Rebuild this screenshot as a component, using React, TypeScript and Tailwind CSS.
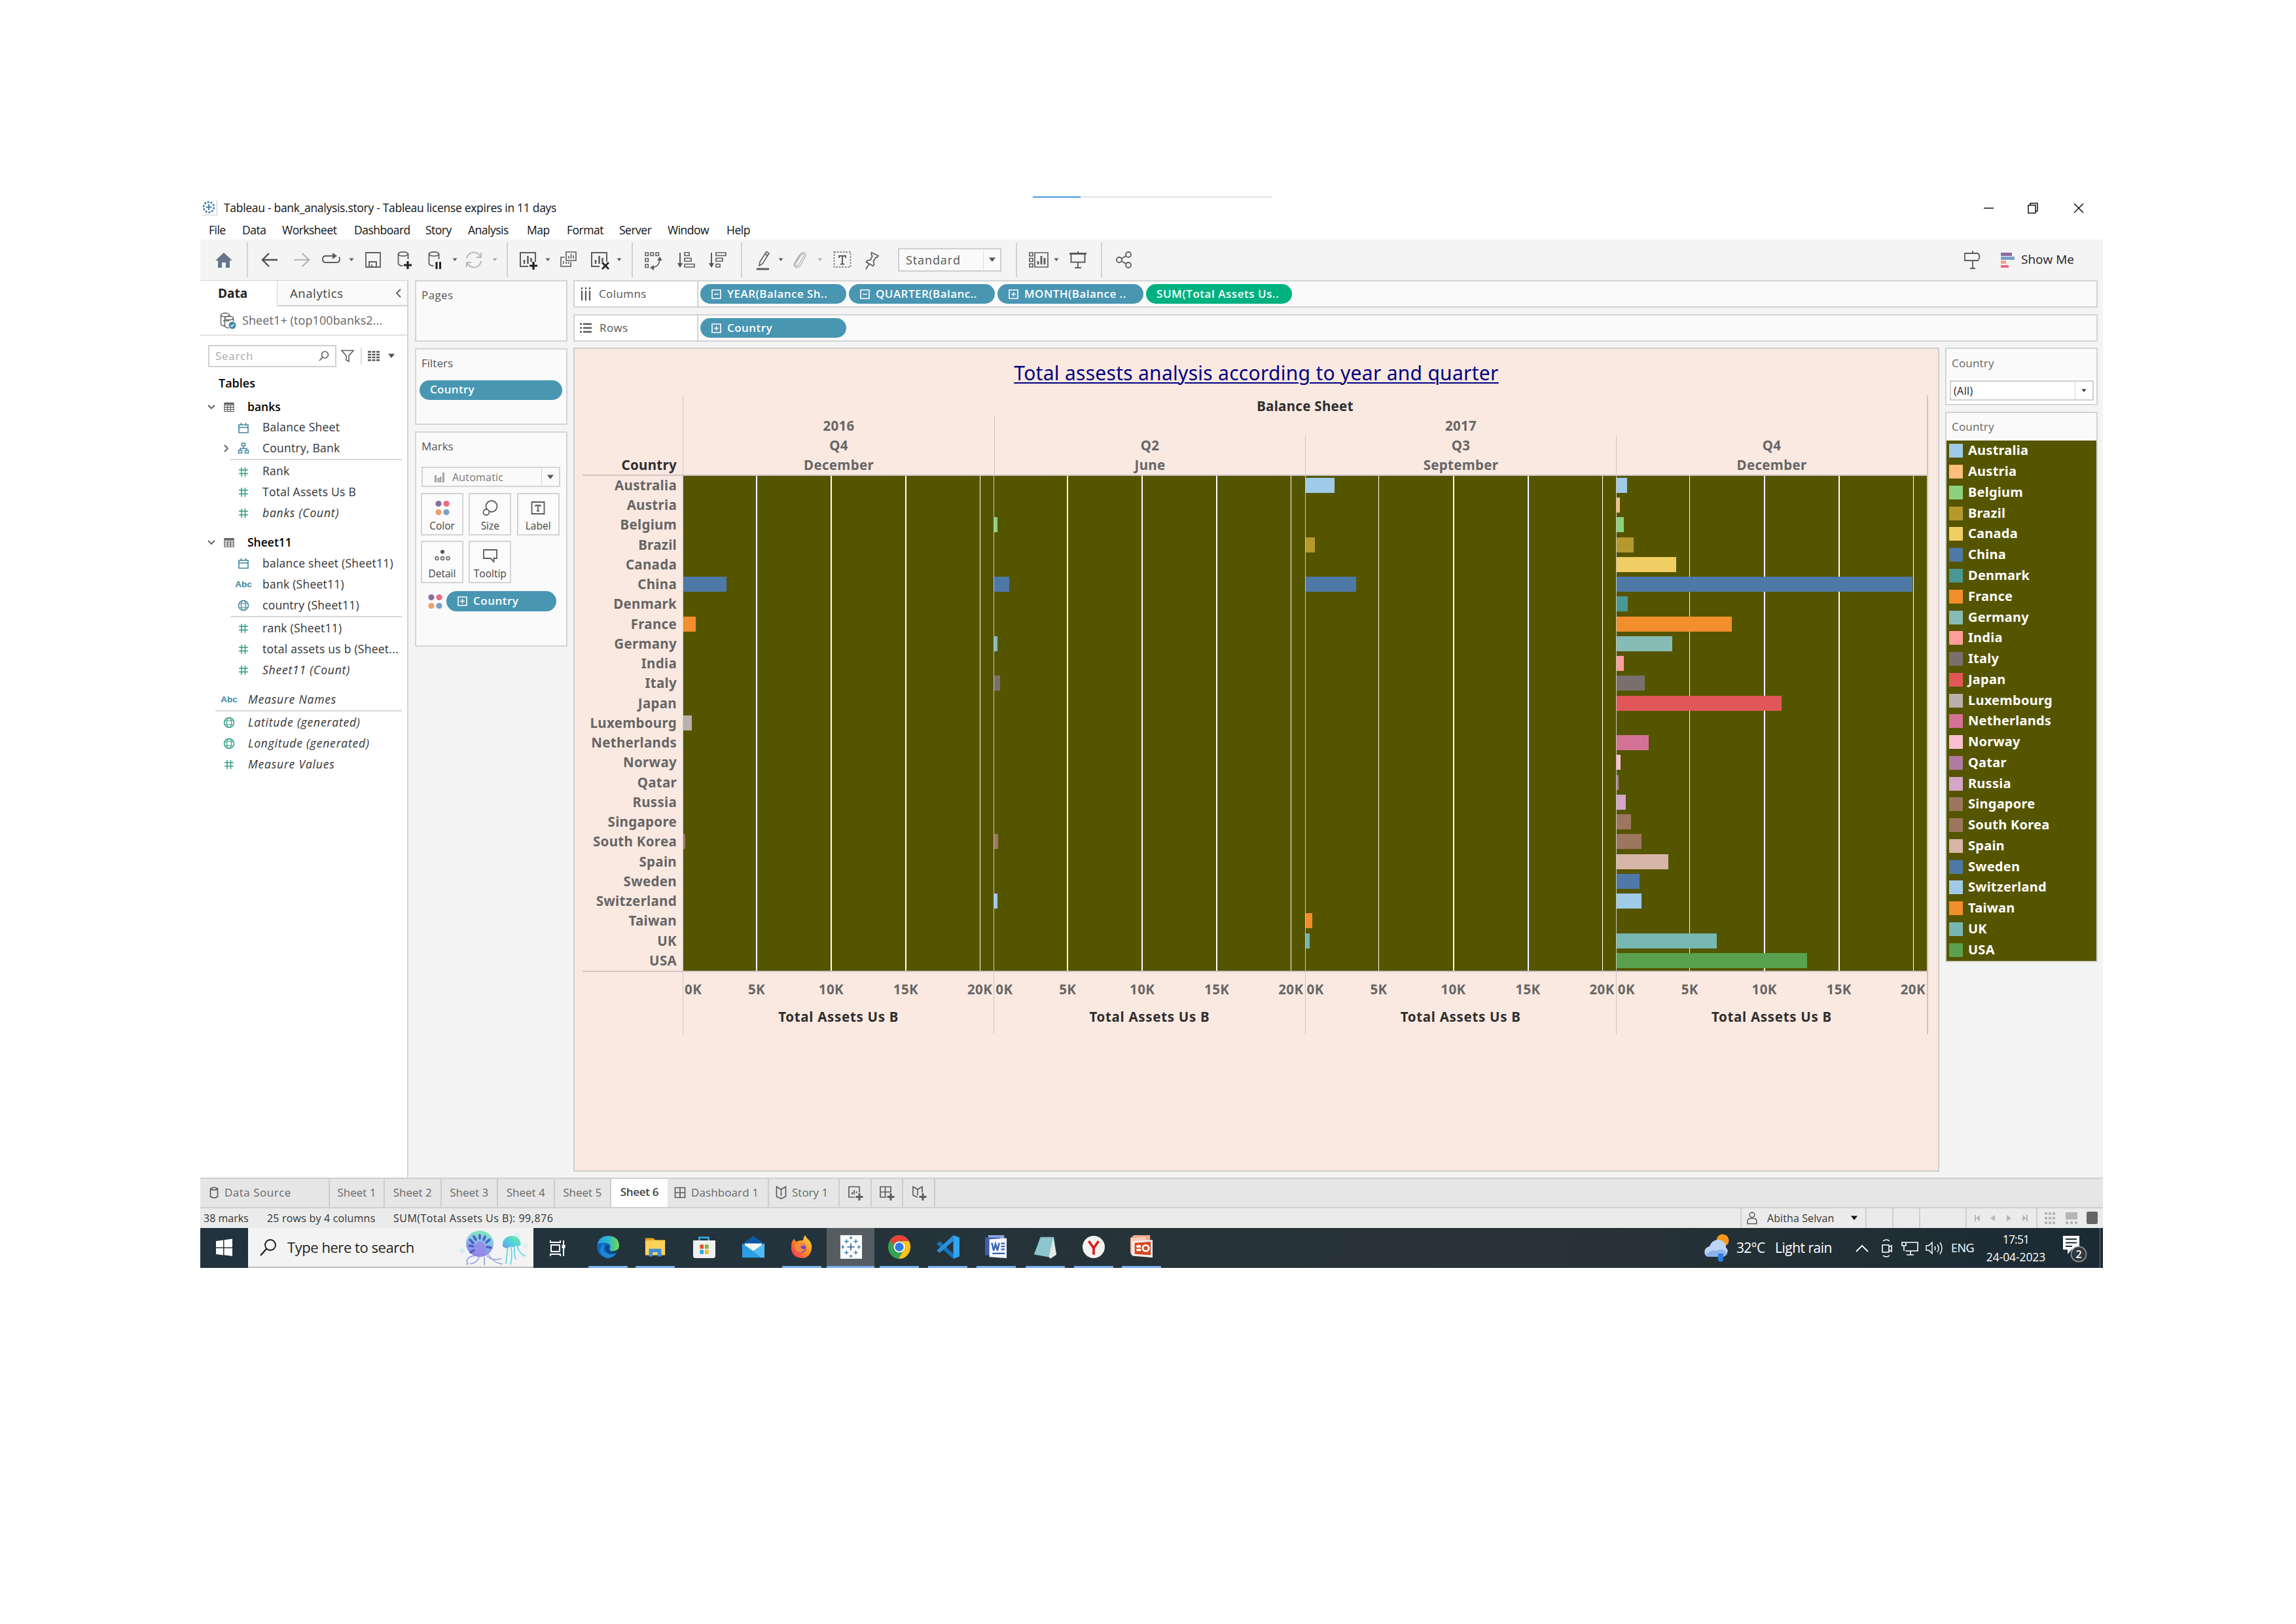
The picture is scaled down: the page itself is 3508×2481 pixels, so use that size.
import React from "react";

type Kids = { children?: React.ReactNode; c?: string };

/* ---------- icon primitives ---------- */
function Ico({ children, c = "", s = 28, h }: Kids & { s?: number; h?: number }) {
  return (
    <svg
      width={s}
      height={h ?? s}
      viewBox={`0 0 ${s} ${h ?? s}`}
      fill="none"
      stroke="#5c5c5c"
      strokeWidth={1.8}
      className={`shrink-0 overflow-visible ${c}`}
    >
      {children}
    </svg>
  );
}
const Caret = ({ c = "", f = "#5c5c5c" }: { c?: string; f?: string }) => (
  <svg width="10" height="6" viewBox="0 0 10 6" className={`shrink-0 ${c}`}>
    <path d="M1.500 0.500h7L5 5z" fill={f} />
  </svg>
);
const BigCaret = ({ c = "", f = "#555" }: { c?: string; f?: string }) => (
  <svg width="12" height="8" viewBox="0 0 12 8" className={`shrink-0 ${c}`}>
    <path d="M1 0.500h10L6 7z" fill={f} />
  </svg>
);
const Sep = ({ c }: { c: string }) => <div className={`h-[54px] w-[2px] shrink-0 bg-[#d2d2d2] ${c}`} />;

const Hash = ({ c = "#2f9c82" }: { c?: string }) => (
  <Ico s={18}>
    <path d="M6 2v14M11.500 2v14M2 6h14M2 11.500h14" stroke={c} strokeWidth={1.500} />
  </Ico>
);
const Cal = () => (
  <Ico s={18}>
    <path d="M2 4h14v12H2zM2 8h14M5.500 1v4M12.500 1v4" stroke="#3d86a3" strokeWidth={1.600} />
  </Ico>
);
const Tree = () => (
  <Ico s={18}>
    <path d="M6.500 1h5v4h-5zM9 5v4M4 12V9h10v3M1.500 12h5v4h-5zM11.500 12h5v4h-5z" stroke="#3d86a3" strokeWidth={1.5} />
  </Ico>
);
const Globe = ({ c = "#3d86a3" }: { c?: string }) => (
  <Ico s={18}>
    <circle cx="9" cy="9" r="7.500" stroke={c} strokeWidth={1.500} />
    <ellipse cx="9" cy="9" rx="3.600" ry="7.500" stroke={c} strokeWidth={1.200} />
    <path d="M2.500 6h13M2.500 12h13" stroke={c} strokeWidth={1.200} />
  </Ico>
);
const Abc = () => (
  <span className="text-[13.500px] font-bold text-[#3d86a3] font-['Liberation_Sans',sans-serif]">Abc</span>
);
const TableIco = () => (
  <Ico s={16}>
    <path d="M1 1.500h14v13H1zM1 5h14M1 8.300h14M1 11.500h14M5.700 5v9.500M10.300 5v9.500" strokeWidth={1.200} />
    <path d="M1 2h14v2H1z" fill="#666" stroke="none" />
  </Ico>
);
const Dots = ({ c = "" }: { c?: string }) => (
  <svg width="22" height="24" viewBox="0 0 22 24" className={`shrink-0 ${c}`}>
    <circle cx="5" cy="5.500" r="4.600" fill="#8a6d9c" />
    <circle cx="17" cy="5.500" r="4.600" fill="#f0677f" />
    <circle cx="5" cy="18.500" r="4.600" fill="#f0a06c" />
    <circle cx="17" cy="18.500" r="4.600" fill="#7b9fc9" />
  </svg>
);

/* ---------- title and menu ---------- */
const TableauMark = () => (
  <svg width="24" height="24" viewBox="0 0 24 24" className="shrink-0" fill="none" stroke="#3a7ca3" strokeWidth="2.400">
    <circle cx="10" cy="10.500" r="8" strokeDasharray="3.200 1.800" />
    <path d="M10 6v9M5.500 10.500h9" strokeWidth="1.800" />
    <path d="M22.500 0v22.500H0" stroke="#ccc" strokeWidth="1.200" />
  </svg>
);

function TitleBar() {
  return (
    <div className="relative flex h-[40px] items-center bg-white pl-[3px] pb-[5px]">
      <div className="absolute left-[1272px] top-0 flex h-[2px] w-[366px] bg-[#e4e4e4]">
        <div className="w-[73px] bg-[#4a97e8]" />
      </div>
      <TableauMark />
      <span className="ml-[9px] text-[17.500px] tracking-[-0.300px] text-[#111] font-['Open_Sans',sans-serif]">
        Tableau - bank_analysis.story - Tableau license expires in 11 days
      </span>
      <svg width="160" height="20" viewBox="0 0 160 20" className="ml-auto mr-[28px]" fill="none" stroke="#111" strokeWidth="1.500">
        <path d="M6 10h15M144 3l14 14M158 3l-14 14" />
        <path d="M74 5.500h11v12H74zM77 5.500V2.500h11v12h-3" />
      </svg>
    </div>
  );
}

const MENU: [string, string][] = [
  ["File", "w-[51px]"],
  ["Data", "w-[61px]"],
  ["Worksheet", "w-[110px]"],
  ["Dashboard", "w-[109px]"],
  ["Story", "w-[65px]"],
  ["Analysis", "w-[90px]"],
  ["Map", "w-[61px]"],
  ["Format", "w-[80px]"],
  ["Server", "w-[74px]"],
  ["Window", "w-[90px]"],
  ["Help", "w-[60px]"],
];
function MenuBar() {
  return (
    <div className="flex h-[26px] items-center bg-white pb-[3px] pl-[13px] text-[17.500px] tracking-[-0.500px] text-[#111] font-['Open_Sans',sans-serif]">
      {MENU.map(([t, w]) => (
        <span key={t} className={`shrink-0 ${w}`}>
          {t}
        </span>
      ))}
    </div>
  );
}

function Toolbar() {
  return (
    <div className="flex h-[62px] items-center bg-[#f4f4f4] text-[#333]">
      <Ico c="ml-[22px]">
        <path d="M14 3l13 12h-4V26h-6v-8h-6v8H5V15H1z" fill="#67758a" stroke="none" />
      </Ico>
      <Sep c="ml-[21px]" />
      <Ico c="ml-[19px]">
        <path d="M26 14H3M13 4L3 14l10 10" strokeWidth={2.400} stroke="#505050" />
      </Ico>
      <Ico c="ml-[21px]">
        <path d="M2 14h23M15 4l10 10-10 10" strokeWidth={2.200} stroke="#b4b4b4" />
      </Ico>
      <Ico c="ml-[17px]">
        <path d="M18 8H6q-5 0-5 5t5 5h16q5 0 5-5 0-2-1-3.500" strokeWidth={1.900} />
        <path d="M16 3l7 5-7 5z" fill="#5c5c5c" stroke="none" />
      </Ico>
      <Caret c="ml-[12px]" />
      <Ico c="ml-[14px]">
        <path d="M3 3h22v22H3zM8 25v-8h11v8M12 25v-4" />
      </Ico>
      <Ico c="ml-[19px]">
        <ellipse cx="13" cy="5" rx="7.500" ry="3.200" />
        <path d="M5.500 5v15q1 3 7 3M20.500 5v8" />
        <path d="M20 16v12M14 22h12" strokeWidth={3.200} stroke="#222" />
      </Ico>
      <Ico c="ml-[20px]">
        <ellipse cx="12" cy="5" rx="7.500" ry="3.200" />
        <path d="M4.500 5v15q1 3 7 3M19.500 5v8" />
        <path d="M16 17v11M21.500 17v11" strokeWidth={3} stroke="#222" />
      </Ico>
      <Caret c="ml-[11px]" />
      <Ico c="ml-[10px]">
        <path d="M3 12a11 11 0 0 1 21-3M25 16a11 11 0 0 1-21 3M25 3v7h-7M3 25v-7h7" stroke="#b8b8b8" strokeWidth={2} />
      </Ico>
      <Caret c="ml-[13px]" f="#a8a8a8" />
      <Sep c="ml-[13px]" />
      <Ico c="ml-[17px]">
        <path d="M14 24H2V3h23v14" strokeWidth={2} />
        <path d="M8 20v-6M13.500 20V8M18.500 17v-6" strokeWidth={2.600} />
        <path d="M22 17v12M16 23h12" strokeWidth={3.200} stroke="#222" />
      </Ico>
      <Caret c="ml-[11px]" />
      <Ico c="ml-[12px]">
        <path d="M11 2h15v13H11zM9 10H3v14h15v-7M7 20v-4M11 20v-3M14.500 20v-3M15 12V8M18.500 12V5M22 12V7" strokeWidth={1.600} />
      </Ico>
      <Ico c="ml-[20px]">
        <path d="M14 24H2V3h23v14" strokeWidth={2} />
        <path d="M8 20v-6M13.500 20V8M18.500 17v-6" strokeWidth={2.600} />
        <path d="M18 18l10 10M28 18L18 28" strokeWidth={2.800} stroke="#222" />
      </Ico>
      <Caret c="ml-[11px]" />
      <Sep c="ml-[14px]" />
      <Ico c="ml-[17px]">
        <path d="M2 3h4.500v4.500H2zM10 3h4.500v4.500H10zM18 3h4.500v4.500H18zM2 12h4.500v4.500H2zM2 21h4.500v4.500H2z" strokeWidth={1.500} />
        <path d="M24 12q0 13-13 14" strokeWidth={1.600} />
        <path d="M20 15l4-6 4 6zM15 22l-6 4 6 4z" fill="#5c5c5c" stroke="none" />
      </Ico>
      <Ico c="ml-[23px]">
        <path d="M4 3v22" strokeWidth={2} />
        <path d="M0 19h8l-4 7z" fill="#555" stroke="none" />
        <path d="M11 3h7v4.500h-7zM11 11.500h10V16H11zM11 20.500h15V25H11z" strokeWidth={1.600} />
      </Ico>
      <Ico c="ml-[20px]">
        <path d="M4 3v22" strokeWidth={2} />
        <path d="M0 19h8l-4 7z" fill="#555" stroke="none" />
        <path d="M11 3h15v4.500H11zM11 11.500h10V16H11zM11 20.500h6V25h-6z" strokeWidth={1.600} />
      </Ico>
      <Sep c="ml-[21px]" />
      <Ico c="ml-[18px]">
        <path d="M19 1.500l4 2.500L13 20l-5 3 1-6zM17 5l4 2.500" strokeWidth={1.600} />
        <path d="M4 28h19" strokeWidth={3} />
      </Ico>
      <Caret c="ml-[8px]" />
      <Ico c="ml-[10px]">
        <path d="M9 18l7-12q3-2.500 4.500 1L12 22q-4 3-5.500-1L15 5q4-5 8 0 1 2-1 5l-8 14q-5 4-8.500-1-1-2 1-5l7-12" stroke="#b5b5b5" strokeWidth={1.400} />
      </Ico>
      <Caret c="ml-[12px]" f="#b0b0b0" />
      <Ico c="ml-[15px]">
        <rect x="1.500" y="2" width="25" height="23" strokeDasharray="2.500 2" strokeWidth={1.400} />
        <path d="M9 11V8h10v3M14 8v13M11 20.500h6" strokeWidth={2} />
      </Ico>
      <Ico c="ml-[17px]">
        <path d="M16 3l9 7-2 2-2-.5-5 5v5l-2 2-9-8 2-2h5l4-5-1-3zM9 19l-7 7" strokeWidth={1.700} transform="rotate(-12 14 14)" />
      </Ico>
      <div className="ml-[26px] flex h-[36px] w-[158px] shrink-0 items-center border-2 border-[#cfcfcf] bg-[#fafafa]">
        <span className="w-[128px] pl-[10px] text-[18px] tracking-[0.900px] text-[#555] font-['Open_Sans',sans-serif]">Standard</span>
        <div className="h-full w-px bg-[#ddd]" />
        <BigCaret c="ml-[7px]" />
      </div>
      <Sep c="ml-[22px]" />
      <Ico c="ml-[19px]">
        <path d="M0 3h5v5H0zM0 11.500h5v5H0zM0 20h5v5H0zM8 3h20v22H8z" strokeWidth={1.700} />
        <path d="M13 21v-5M18 21V8M23 21V11" strokeWidth={2.800} />
      </Ico>
      <Caret c="ml-[8px]" />
      <Ico c="ml-[14px]">
        <path d="M1 4.500h26" strokeWidth={3} />
        <path d="M14 1v3M3.500 5v12.500h21V5M14 18v8M9 26h10" strokeWidth={2} />
      </Ico>
      <Sep c="ml-[21px]" />
      <Ico c="ml-[19px]">
        <circle cx="7" cy="14" r="4" />
        <circle cx="21" cy="6" r="4" />
        <circle cx="21" cy="22" r="4" />
        <path d="M10.500 12l7-4M10.500 16l7 4" />
      </Ico>
      <Ico c="ml-auto">
        <path d="M14 0v4M2 4h20q5 5 0 11H2zM14 15v12M10 27h8" />
      </Ico>
      <svg width="22" height="24" viewBox="0 0 22 24" className="ml-[29px] shrink-0">
        <path d="M0 1h17v5H0z" fill="#8a6d9c" />
        <path d="M0 7h21v5H0z" fill="#7b9fc9" />
        <path d="M0 13h8v5H0z" fill="#f0a882" />
        <path d="M0 20h12v4H0z" fill="#f0677f" />
      </svg>
      <span className="ml-[9px] w-[125px] pb-[2px] text-[19px] text-[#222] font-['Open_Sans',sans-serif]">Show Me</span>
    </div>
  );
}

/* ---------- data pane ---------- */
const Rule = ({ c }: { c: string }) => <div className={`mr-[8px] h-[2px] bg-[#d9d9d9] ${c}`} />;

function Field({ icon, label, it = false, exp = false, h = "h-[32px]" }: { icon: React.ReactNode; label: string; it?: boolean; exp?: boolean; h?: string }) {
  return (
    <div className={`flex items-center pl-[31px] ${h}`}>
      <div className="flex w-[18px] justify-center">
        {exp && (
          <Ico s={8} h={12}>
            <path d="M1 1l5 5-5 5" />
          </Ico>
        )}
      </div>
      <div className="flex w-[34px] justify-center">{icon}</div>
      <span className={`ml-[12px] pb-[2px] ${it ? "italic tracking-[0.800px]" : "tracking-[0.250px]"}`}>{label}</span>
    </div>
  );
}
function TopField({ icon, label, it = false, arrow = false }: { icon: React.ReactNode; label: string; it?: boolean; arrow?: boolean }) {
  return (
    <div className="flex h-[32px] items-center pl-[11px]">
      <div className="w-[16px]">
        {arrow && (
          <Ico s={12} h={8}>
            <path d="M1 1l5 5 5-5" />
          </Ico>
        )}
      </div>
      <div className="flex w-[34px] justify-center">{icon}</div>
      <span className={arrow ? "ml-[11px] pb-px font-semibold text-black" : `ml-[12px] pb-[2px] ${it ? "italic tracking-[0.800px]" : ""}`}>{label}</span>
    </div>
  );
}

function DataPane() {
  return (
    <div className="w-[318px] shrink-0 border-r-2 border-[#d4d4d4] bg-white text-[17.500px] text-[#333] whitespace-nowrap font-['Open_Sans',sans-serif]">
      <div className="flex h-[40px] border-t border-[#d4d4d4]">
        <div className="w-[117px] pl-[27px] text-[19px] leading-[38px] font-bold text-[#222]">Data</div>
        <div className="flex flex-1 items-center border-b-2 border-l border-[#d0d0d0] bg-[#fafafa] pl-[19px] text-[18.500px] tracking-[0.600px] text-[#444]">
          Analytics
          <Ico s={9} h={14} c="ml-auto mr-[9px]">
            <path d="M8 1L2 7l6 6" />
          </Ico>
        </div>
      </div>
      <div className="flex h-[45px] items-center border-b-2 border-[#e2e2e2] pl-[30px] text-[18px] text-[#666]">
        <Ico s={26}>
          <ellipse cx="8" cy="4" rx="6.500" ry="2.800" strokeWidth={1.400} />
          <path d="M1.500 4v14q1 3 6 3M14.500 4v2" strokeWidth={1.400} />
          <ellipse cx="14" cy="9" rx="6.500" ry="2.800" strokeWidth={1.400} />
          <path d="M7.500 9v12q1 3 6 3M20.500 9v5M5 13h9" strokeWidth={1.400} />
          <circle cx="19" cy="20" r="5.500" fill="#3d86a3" stroke="none" />
          <path d="M16.500 20l2 2 3-4" stroke="#fff" strokeWidth={1.400} />
        </Ico>
        <span className="ml-[8px] tracking-[0.100px]">Sheet1+ (top100banks2...</span>
      </div>
      <div className="flex h-[48px] items-end pl-[12px]">
        <div className="flex h-[34px] w-[196px] items-center border-2 border-[#cfcfcf] bg-white pl-[9px] text-[17px] tracking-[0.700px] text-[#aaa]">
          Search
          <Ico s={16} c="ml-auto mr-[9px]">
            <circle cx="9.500" cy="6" r="5" strokeWidth={1.600} />
            <path d="M6 9.500L1 15" strokeWidth={1.800} />
          </Ico>
        </div>
        <div className="flex h-[34px] items-center">
          <Ico s={20} c="ml-[7px]">
            <path d="M1 1.500h18l-7 8V18l-4-2V9.500z" strokeWidth={1.600} />
          </Ico>
          <div className="ml-[10px] h-[26px] w-[2px] bg-[#ddd]" />
          <svg width="18" height="16" viewBox="0 0 18 16" className="ml-[9px]" stroke="#555" strokeWidth="2.600">
            <path d="M0 1.500h5M6.500 1.500h5M13 1.500h5M0 5.800h5M6.500 5.800h5M13 5.800h5M0 10h5M6.500 10h5M13 10h5M0 14.200h5M6.500 14.200h5M13 14.200h5" />
          </svg>
          <BigCaret c="ml-[12px]" />
        </div>
      </div>
      <div className="mt-[10px] h-[30px] pl-[28px] text-[18px] leading-[29px] font-semibold text-black">Tables</div>
      <div className="h-[5px]" />
      <TopField arrow icon={<TableIco />} label="banks" />
      <Field icon={<Cal />} label="Balance Sheet" h="h-[31px]" />
      <Field icon={<Tree />} label="Country, Bank" exp />
      <Rule c="ml-[46px] mb-[2px]" />
      <Field icon={<Hash />} label="Rank" h="h-[31px]" />
      <Field icon={<Hash />} label="Total Assets Us B" />
      <Field icon={<Hash />} label="banks (Count)" it />
      <div className="h-[13px]" />
      <TopField arrow icon={<TableIco />} label="Sheet11" />
      <Field icon={<Cal />} label="balance sheet (Sheet11)" />
      <Field icon={<Abc />} label="bank (Sheet11)" />
      <Field icon={<Globe />} label="country (Sheet11)" />
      <Rule c="ml-[46px] mb-[1px]" />
      <Field icon={<Hash />} label="rank (Sheet11)" />
      <Field icon={<Hash />} label="total assets us b (Sheet..." />
      <Field icon={<Hash />} label="Sheet11 (Count)" it />
      <div className="h-[13px]" />
      <TopField icon={<Abc />} label="Measure Names" it />
      <Rule c="ml-[23px] mb-[1px]" />
      <TopField icon={<Globe c="#2f9c82" />} label="Latitude (generated)" it />
      <TopField icon={<Globe c="#2f9c82" />} label="Longitude (generated)" it />
      <TopField icon={<Hash />} label="Measure Values" it />
    </div>
  );
}

/* ---------- cards ---------- */
const BoxSign = ({ plus = false }: { plus?: boolean }) => (
  <svg width="15" height="15" viewBox="0 0 15 15" fill="none" stroke="#fff" strokeWidth="1.600" className="shrink-0">
    <path d={plus ? "M1 1h13v13H1zM4 7.500h7M7.500 4v7" : "M1 1h13v13H1zM4 7.500h7"} />
  </svg>
);

function MarkBtn({ icon, label }: { icon: React.ReactNode; label: string }) {
  return (
    <div className="flex h-[65px] w-[65px] flex-col items-center border-2 border-[#d4d4d4] bg-[#fbfbfb] text-[15.500px] text-[#444]">
      <div className="flex h-[41px] items-center">{icon}</div>
      <div className="-mt-[3px] leading-[20px]">{label}</div>
    </div>
  );
}

function CardsColumn() {
  return (
    <div className="flex w-[233px] shrink-0 flex-col gap-[10px] text-[17px] text-[#555] font-['Open_Sans',sans-serif]">
      <div className="h-[94px] border-2 border-[#d4d4d4] bg-[#fafafa] pt-[8px] pl-[8px] leading-[26px] tracking-[0.400px]">Pages</div>
      <div className="h-[117px] border-2 border-[#d4d4d4] bg-[#fafafa] pt-[8px]">
        <div className="pl-[8px] leading-[26px]">Filters</div>
        <div className="mt-[13px] ml-[5px] flex h-[30px] w-[218px] items-center rounded-full bg-[#4996b2] pb-[2px] pl-[16px] font-semibold tracking-[0.300px] text-white">Country</div>
      </div>
      <div className="h-[329px] border-2 border-[#d4d4d4] bg-[#fafafa] pt-[8px]">
        <div className="pl-[8px] leading-[26px]">Marks</div>
        <div className="mt-[18px] ml-[8px] flex h-[31px] w-[212px] items-center border-2 border-[#d4d4d4] text-[16px] text-[#777]">
          <svg width="16" height="16" viewBox="0 0 16 16" className="ml-[18px]" fill="#a3a3a3">
            <path d="M0 5h3v11H0zM4.500 9h3v7h-3zM8 7h2.500v9H8zM12 1h3v15h-3z" />
          </svg>
          <span className="ml-[11px] tracking-[0.200px]">Automatic</span>
          <div className="ml-auto flex h-full w-[27px] items-center justify-center border-l border-[#d4d4d4]">
            <BigCaret />
          </div>
        </div>
        <div className="mt-[9px] ml-[7px] grid w-[212px] grid-cols-3 gap-[8px]">
          <MarkBtn icon={<Dots />} label="Color" />
          <MarkBtn
            label="Size"
            icon={
              <Ico s={24}>
                <circle cx="14" cy="9.500" r="8.500" />
                <circle cx="6" cy="18.500" r="4.500" fill="#fbfbfb" />
              </Ico>
            }
          />
          <MarkBtn
            label="Label"
            icon={
              <Ico s={22}>
                <path d="M1.500 2h19v18h-19z" />
                <path d="M7.500 9V7h7v2M11 7v9M9 15.500h4" />
              </Ico>
            }
          />
          <MarkBtn
            label="Detail"
            icon={
              <Ico s={22}>
                <circle cx="11" cy="5" r="3" fill="#555" stroke="none" />
                <circle cx="2.500" cy="15" r="2.400" strokeWidth={1.500} />
                <circle cx="11" cy="15" r="2.400" strokeWidth={1.500} />
                <circle cx="19.500" cy="15" r="2.400" strokeWidth={1.500} />
              </Ico>
            }
          />
          <MarkBtn
            label="Tooltip"
            icon={
              <Ico s={22}>
                <path d="M1 2h20v13h-4.500v5l-5-5H1z" />
              </Ico>
            }
          />
        </div>
        <div className="mt-[12px] flex items-center pl-[18px]">
          <Dots />
          <div className="ml-[6px] flex h-[31px] w-[168px] items-center rounded-full bg-[#4996b2] pb-px pl-[17px] font-semibold text-white">
            <BoxSign plus />
            <span className="ml-[9px] tracking-[0.500px]">Country</span>
          </div>
        </div>
      </div>
    </div>
  );
}

function Pill({ children, plus = false, green = false }: { children: string; plus?: boolean; green?: boolean }) {
  return (
    <div className={`mr-[4px] flex h-[30px] w-[223px] shrink-0 items-center rounded-full text-[17px] font-semibold text-white ${green ? "bg-[#00b180] pl-[16px] tracking-[0.550px]" : "bg-[#4996b2] pl-[17px] tracking-[0.450px]"}`}>
      {!green && <BoxSign plus={plus} />}
      <span className={green ? "pb-px" : "ml-[9px] pb-px"}>{children}</span>
    </div>
  );
}

function Shelf({ label, icon, children }: { label: string; icon: React.ReactNode; children: React.ReactNode }) {
  return (
    <div className="flex h-[42px] border-2 border-[#d4d4d4] bg-[#fafafa] text-[17px] text-[#555] whitespace-nowrap font-['Open_Sans',sans-serif]">
      <div className="flex w-[189px] items-center border-r-2 border-[#d4d4d4] bg-white pl-[8px]">
        {icon}
        <span className="ml-[12px] pb-px tracking-[0.400px]">{label}</span>
      </div>
      <div className="flex items-center pl-[3px]">{children}</div>
    </div>
  );
}

/* ---------- chart ---------- */
const COUNTRIES: [string, string][] = [
  ["Australia", "#a0cbe8"],
  ["Austria", "#ffbe7d"],
  ["Belgium", "#8cd17d"],
  ["Brazil", "#b6992d"],
  ["Canada", "#f1ce63"],
  ["China", "#4e79a7"],
  ["Denmark", "#499894"],
  ["France", "#f28e2b"],
  ["Germany", "#86bcb6"],
  ["India", "#ff9d9a"],
  ["Italy", "#79706e"],
  ["Japan", "#e15759"],
  ["Luxembourg", "#bab0ac"],
  ["Netherlands", "#d37295"],
  ["Norway", "#fabfd2"],
  ["Qatar", "#b07aa1"],
  ["Russia", "#d4a6c8"],
  ["Singapore", "#9d7660"],
  ["South Korea", "#9d7660"],
  ["Spain", "#d7b5a6"],
  ["Sweden", "#4e79a7"],
  ["Switzerland", "#a0cbe8"],
  ["Taiwan", "#f28e2b"],
  ["UK", "#76b7b2"],
  ["USA", "#59a14f"],
];

/* bar lengths in px, 22.7 px for each thousand */
const PANELS: Record<string, number>[] = [
  { China: 66, France: 19, Luxembourg: 13, "South Korea": 3 },
  { Belgium: 5, China: 23, Germany: 5, Italy: 9, "South Korea": 6, Switzerland: 5 },
  { Australia: 44, Brazil: 14, China: 77, Taiwan: 10, UK: 6 },
  {
    Australia: 16, Austria: 5, Belgium: 11, Brazil: 26, Canada: 91, China: 452, Denmark: 17, France: 176,
    Germany: 85, India: 11, Italy: 43, Japan: 252, Netherlands: 49, Norway: 6, Qatar: 3, Russia: 14,
    Singapore: 22, "South Korea": 38, Spain: 79, Sweden: 35, Switzerland: 38, UK: 153, USA: 291,
  },
];

function Panel({ data, last }: { data: Record<string, number>; last: boolean }) {
  return (
    <div className={`relative grid flex-1 grid-rows-[repeat(25,minmax(0,1fr))] border-l border-[#c9c9c0] bg-[#555500] ${last ? "border-r-2" : ""}`}>
      <div className="absolute inset-y-0 left-[111px] w-[1.500px] bg-white" />
      <div className="absolute inset-y-0 left-[225px] w-[2px] bg-white" />
      <div className="absolute inset-y-0 left-[339px] w-[2px] bg-white" />
      <div className="absolute inset-y-0 left-[453px] w-px bg-white" />
      {COUNTRIES.map(([n, col]) => (
        <div key={n} className="relative pt-[3px]">
          {data[n] ? <div className="h-[23px]" style={{ width: data[n], background: col }} /> : null}
        </div>
      ))}
    </div>
  );
}

function AxisFoot({ last }: { last: boolean }) {
  return (
    <div className={`h-[95px] flex-1 border-l border-[#cdc6c2] ${last ? "border-r-2" : ""}`}>
      <div className="flex h-[52px] items-center text-[20.500px] tracking-[0.400px]">
        <span className="w-[55px] pl-[2px]">0K</span>
        <span className="w-[114px] text-center">5K</span>
        <span className="w-[114px] text-center">10K</span>
        <span className="w-[114px] text-center">15K</span>
        <span className="ml-auto pr-[2px]">20K</span>
      </div>
      <div className="text-center text-[20.500px] leading-[33px] tracking-[0.700px] text-[#2e2e2e]">Total Assets Us B</div>
    </div>
  );
}

const line = "border-[#cdc6c2]";
function Chart() {
  return (
    <div className="h-[1259px] w-[2087px] shrink-0 border-2 border-[#d4cdc9] bg-[#fae9e1] whitespace-nowrap font-['Noto_Sans',sans-serif]">
      <div className="h-[71px] pt-[17px] text-center text-[30px] leading-[40px] tracking-[0.280px] text-[#000080]">
        <span className="underline decoration-[2px] underline-offset-[3px]">Total assests analysis according to year and quarter</span>
      </div>
      <div className="ml-[12px] flex w-[2056px] text-[20.500px] font-bold tracking-[0.300px] text-[#666]">
        <div className="flex w-[153px] shrink-0 flex-col">
          <div className={`flex h-[123px] items-end justify-end border-b-2 pr-[9px] leading-[30px] text-[#2e2e2e] ${line}`}>Country</div>
          <div className={`grid h-[758px] grid-rows-[repeat(25,minmax(0,1fr))] border-b-2 pr-[9px] text-right leading-[29px] ${line}`}>
            {COUNTRIES.map(([n]) => (
              <div key={n}>{n}</div>
            ))}
          </div>
        </div>
        <div className="flex-1">
          <div className={`h-[123px] border-b-2 border-l border-r-2 text-center leading-[30px] ${line}`}>
            <div className="h-[30px] pt-px text-[#2e2e2e]">Balance Sheet</div>
            <div className="flex">
              <div className="w-[475px] pt-px">
                <div>2016</div>
                <div>Q4</div>
                <div>December</div>
              </div>
              <div className={`flex-1 border-l ${line}`}>
                <div className="h-[31px] pt-px">2017</div>
                <div className="flex h-[60px]">
                  <div className="flex-1">
                    <div>Q2</div>
                    <div>June</div>
                  </div>
                  <div className={`flex-1 border-l ${line}`}>
                    <div>Q3</div>
                    <div>September</div>
                  </div>
                  <div className={`flex-1 border-l ${line}`}>
                    <div>Q4</div>
                    <div>December</div>
                  </div>
                </div>
              </div>
            </div>
          </div>
          <div className={`flex h-[758px] border-b-2 ${line}`}>
            {PANELS.map((p, i) => (
              <Panel key={i} data={p} last={i === 3} />
            ))}
          </div>
          <div className="flex">
            {PANELS.map((_, i) => (
              <AxisFoot key={i} last={i === 3} />
            ))}
          </div>
        </div>
      </div>
    </div>
  );
}

function RightCards() {
  return (
    <div className="flex w-[233px] shrink-0 flex-col gap-[10px] text-[17px] text-[#666] font-['Open_Sans',sans-serif]">
      <div className="h-[88px] border-2 border-[#d4d4d4] bg-white">
        <div className="h-[44px] bg-[#fafafa] pt-[9px] pl-[8px] leading-[26px] tracking-[0.200px]">Country</div>
        <div className="mt-[4px] ml-[5px] flex h-[31px] w-[220px] items-center border-2 border-[#cfcfcf] bg-white pl-[4px] text-[16px] tracking-[0.400px] text-[#222]">
          (All)
          <div className="ml-auto flex h-full w-[27px] items-center justify-center border-l border-[#d4d4d4]">
            <Caret f="#333" />
          </div>
        </div>
      </div>
      <div className="h-[841px] border-2 border-[#d4d4d4] bg-[#fafafa]">
        <div className="h-[42px] pt-[8px] pl-[8px] leading-[26px] tracking-[0.200px]">Country</div>
        <div className="h-[795px] bg-[#555500] text-[20px] font-bold tracking-[0.250px] text-white font-['Noto_Sans',sans-serif]">
          {COUNTRIES.map(([n, col]) => (
            <div key={n} className="flex h-[31.780px] items-center pl-[4px]">
              <div className="h-[21px] w-[21px]" style={{ background: col }} />
              <span className="ml-[8px] pb-px">{n}</span>
            </div>
          ))}
        </div>
      </div>
    </div>
  );
}

/* ---------- bottom bars ---------- */
const SHEETS = ["Sheet 2", "Sheet 3", "Sheet 4", "Sheet 5"];
const tab = "flex h-full shrink-0 items-center border-r-2 border-[#cdcdcd] pb-px";
function SheetTabs() {
  return (
    <div className="flex h-[47px] items-center border-y-2 border-[#cfcfcf] bg-[#e6e6e6] text-[17px] text-[#666] whitespace-nowrap font-['Open_Sans',sans-serif]">
      <div className={`${tab} w-[198px] pl-[14px]`}>
        <Ico s={14} h={20}>
          <path d="M1.500 4q5.500-4 11 0v12q-5.500 4-11 0zM1.500 4q5.500 4 11 0" strokeWidth={1.700} />
        </Ico>
        <span className="ml-[9px] tracking-[0.500px]">Data Source</span>
      </div>
      <div className={`${tab} w-[84px] justify-center`}>Sheet 1</div>
      {SHEETS.map((s) => (
        <div key={s} className={`${tab} w-[86.500px] justify-center`}>
          {s}
        </div>
      ))}
      <div className="flex h-full w-[86px] items-center justify-center bg-white pb-[3px] font-semibold tracking-[-0.300px] text-[#444]">Sheet 6</div>
      <div className={`${tab} w-[155px] pl-[10px]`}>
        <Ico s={18}>
          <path d="M1.500 1.500h15v15h-15zM9 1.500v15M1.500 9h15" strokeWidth={1.700} />
        </Ico>
        <span className="ml-[8px] tracking-[0.100px]">Dashboard 1</span>
      </div>
      <div className={`${tab} w-[108px] pl-[10px]`}>
        <Ico s={17} h={24}>
          <path d="M1.500 3l7 4 7-4v15l-7 3-7-3zM8.500 7v10" strokeWidth={1.700} />
        </Ico>
        <span className="ml-[8px]">Story 1</span>
      </div>
      <div className={`${tab} w-[49px] justify-center`}>
        <Ico s={24}>
          <path d="M11 19H2V3h16v9M7 15v-4M10 15V8M13.500 13v-3" strokeWidth={1.700} />
          <path d="M18 13v11M12.500 18.500h11" strokeWidth={3} />
        </Ico>
      </div>
      <div className={`${tab} w-[48px] justify-center`}>
        <Ico s={24}>
          <path d="M11 19H2V3h16v9M9.500 3v16M2 11h15" strokeWidth={1.700} />
          <path d="M18 13v11M12.500 18.500h11" strokeWidth={3} />
        </Ico>
      </div>
      <div className={`${tab} w-[49px] justify-center`}>
        <Ico s={24}>
          <path d="M10 19l-7-3V3l7 4 7-4v9M10 7v9" strokeWidth={1.700} />
          <path d="M18 13v11M12.500 18.500h11" strokeWidth={3} />
        </Ico>
      </div>
    </div>
  );
}

function StatusBar() {
  return (
    <div className="flex h-[30px] items-center bg-[#ebebeb] text-[16px] text-[#333] whitespace-nowrap font-['Open_Sans',sans-serif]">
      <span className="w-[97px] pl-[5px]">38 marks</span>
      <span className="ml-[5px] w-[193px] tracking-[0.200px]">25 rows by 4 columns</span>
      <span className="tracking-[0.500px]">SUM(Total Assets Us B): 99,876</span>
      <div className="ml-auto flex h-full w-[193px] items-center border-x-2 border-[#cfcfcf] pl-[8px]">
        <Ico s={16} h={20}>
          <circle cx="8" cy="5" r="3.800" strokeWidth={1.500} />
          <path d="M1 18.500v-3q0-5 4-5h6q4 0 4 5v3z" strokeWidth={1.500} />
        </Ico>
        <span className="ml-[15px] tracking-[0.100px]">Abitha Selvan</span>
        <BigCaret c="ml-auto mr-[11px]" f="#111" />
      </div>
      <div className="h-full w-[41px] border-r-2 border-[#cfcfcf]" />
      <div className="h-full w-[41px] border-r-2 border-[#cfcfcf]" />
      <div className="h-full w-[71px] border-r-2 border-[#cfcfcf]" />
      <div className="flex h-full w-[108px] items-center border-r-2 border-[#cfcfcf]">
        <svg width="106" height="12" viewBox="0 0 106 12" fill="#b8b8b8">
          <path d="M12 1h2v10h-2zM20 1v10l-6-5zM43 1v10l-7-5zM61 1v10l7-5zM85 1v10l6-5zM91 1h2v10h-2z" />
        </svg>
      </div>
      <svg width="100" height="24" viewBox="0 0 100 24" fill="#b5b5b5">
        <path d="M11 3h4v4h-4zM17 3h4v4h-4zM23 3h4v4h-4zM11 10h4v4h-4zM17 10h4v4h-4zM23 10h4v4h-4zM11 17h4v4h-4zM17 17h4v4h-4zM23 17h4v4h-4z" />
        <path d="M43 3h18v11H43zM43 17h4v4h-4zM50 17h4v4h-4zM57 17h4v4h-4z" />
        <rect x="75" y="2" width="17" height="19" rx="2" fill="#666" />
      </svg>
    </div>
  );
}

function Task({ children, w, ul, hi = false }: { children: React.ReactNode; w: string; ul?: boolean; hi?: boolean }) {
  return (
    <div className={`flex h-full shrink-0 flex-col items-center ${w} ${hi ? "bg-[#545d62]" : ""}`}>
      <div className="flex flex-1 items-center">
        <svg width="34" height="36" viewBox="0 0 36 40" preserveAspectRatio="none" className="overflow-visible">
          {children}
        </svg>
      </div>
      <div className={`h-[3px] ${hi ? "w-full" : "w-[60px]"} ${ul ? "bg-[#76b0ee]" : ""}`} />
    </div>
  );
}

function TaskBar() {
  return (
    <div className="flex h-[61px] items-center bg-gradient-to-r from-[#20333e] via-[#283337] via-70% to-[#1b2b34] text-white whitespace-nowrap font-['Open_Sans',sans-serif]">
      <svg width="73" height="61" viewBox="0 0 73 61" className="shrink-0" fill="#fff">
        <path d="M24 20l11-1.500v11H24zM36.500 18.300L49 16.500v13H36.500zM24 31h11v10.500L24 40zM36.500 31H49v12l-12.500-1.700z" />
      </svg>
      <div className="flex h-full w-[436px] shrink-0 items-center border-b-2 border-[#bcbcbc] bg-[#f3f3f3]">
        <Ico s={26} c="ml-[18px]">
          <circle cx="16" cy="9" r="8" stroke="#111" />
          <path d="M10 15L1 25" stroke="#111" strokeWidth={2} />
        </Ico>
        <span className="ml-[16px] w-[263px] text-[22px] tracking-[-0.450px] text-[#222]">Type here to search</span>
        <svg width="108" height="56" viewBox="0 0 108 56">
          <defs>
            <linearGradient id="jf" x1="0.600" y1="0" x2="0.400" y2="1">
              <stop offset="0" stopColor="#7fecb0" />
              <stop offset=".35" stopColor="#86c8ea" />
              <stop offset="1" stopColor="#8f7be8" />
            </linearGradient>
            <linearGradient id="jf2" x1="1" y1="0" x2="0" y2="1">
              <stop offset="0" stopColor="#6ff0a0" />
              <stop offset=".6" stopColor="#4fcbe0" />
              <stop offset="1" stopColor="#7f8fe8" />
            </linearGradient>
          </defs>
          <path d="M26 40q-14 1-15 9 4 5-1 4M30 42q-2 9-14 11M38 42v13M42 40q5 9 22 5M44 38q8 14 22 15" fill="none" stroke="#8f9fe0" strokeWidth="1.500" />
          <circle cx="4" cy="33" r="4" fill="#d5ecf8" />
          <circle cx="88" cy="9" r="3.500" fill="#d8eff6" />
          <circle cx="101" cy="25" r="3.500" fill="#d8f0f4" />
          <ellipse cx="31" cy="22" rx="21" ry="20" fill="url(#jf)" />
          <path d="M21 26l-6-1M21 21l-5-5M25 16l-3-5M31 14v-5M37 16l2-5M41 20l5-4M42 27l6 1M22 32l-5 3" stroke="#4f5fc0" strokeWidth="3.600" strokeLinecap="round" />
          <path d="M24 30q0-12 7-12t9 12l-2 10q-6 4-12 0z" fill="#9b86ea" opacity=".8" />
          <path d="M66 26Q65 12 79 10q13 0 15 13-3 5-8 2-4 4-8 1-5 6-12 0z" fill="url(#jf2)" />
          <path d="M74 27q-2 14-3 26M79 27q2 14-1 27M84 27q-1 10 2 19M88 26q4 12 13 15" fill="none" stroke="#62d8e4" strokeWidth="1.800" />
        </svg>
      </div>
      <Ico s={28} c="ml-[22px] mr-[29px]">
        <path d="M4 2v3h15V2M4 26v-3h15v3M5 9h13v10H5zM24 2v24" stroke="#fff" strokeWidth={2} />
        <path d="M21.500 9h5v5h-5z" fill="#fff" stroke="none" />
      </Ico>
      <Task w="w-[70px]" ul>
        <defs>
          <linearGradient id="eg" x1="0" y1="0" x2="1" y2="0">
            <stop offset="0" stopColor="#1b9de2" />
            <stop offset=".5" stopColor="#2fb8d0" />
            <stop offset="1" stopColor="#6fdc4a" />
          </linearGradient>
        </defs>
        <path d="M0 19Q1 2 18 2L26 20 22 38Q1 39 0 19z" fill="#1267b8" />
        <path d="M1 15Q4 1 19 1 36 2 36 19q-1 9-12 8-5-2-2-6 0-8-9-8-8 0-12 2z" fill="url(#eg)" />
        <path d="M13 15q-7 13 7 17 8 1 13-4-6 12-18 11-9-4-10-13 1-9 8-11z" fill="#1a86d8" />
        <path d="M14 17q-3 11 7 15 6 1 12-3-12 3-14-7 0-3 2-5z" fill="#0c4a8c" />
      </Task>
      <Task w="w-[73px]" ul>
        <path d="M2 5h13l3 3h16v5H2z" fill="#e8a317" />
        <rect x="2" y="9" width="32" height="25" fill="#ffd25c" />
        <path d="M8 36V23h20v13h-6v-7h-8v7z" fill="#3f8edb" />
      </Task>
      <Task w="w-[78px]">
        <path d="M10 11V4h15v7" fill="none" stroke="#32a8e0" strokeWidth="3" />
        <path d="M0 9h36v26q0 4-4 4H4q-4 0-4-4z" fill="#f1f1f1" />
        <path d="M11 16h6v7h-6z" fill="#e8502c" />
        <path d="M19 16h6v7h-6z" fill="#7db72f" />
        <path d="M11 25h6v7h-6z" fill="#2aa5e8" />
        <path d="M19 25h6v7h-6z" fill="#fab81c" />
      </Task>
      <Task w="w-[72px]">
        <path d="M0 15L18 1l18 14v6H0z" fill="#0c59a4" />
        <path d="M4 14h28v16H4z" fill="#f2f6fa" />
        <path d="M0 14l18 13 18-13v24H0z" fill="#2b9fe6" />
        <path d="M18 27l18-13v24H30z" fill="#4cbcf2" />
      </Task>
      <Task w="w-[76px]" ul>
        <defs>
          <linearGradient id="ff" x1="1" y1="0" x2="0" y2="1">
            <stop offset="0" stopColor="#ffe14a" />
            <stop offset=".5" stopColor="#ff8a1f" />
            <stop offset="1" stopColor="#f0266a" />
          </linearGradient>
        </defs>
        <path d="M2 12l3-6 4 5q5-3 11-2 1-6 3-9 3 5 7 9 5 6 4 14-3 16-16 16Q3 38 1 24 1 16 2 12z" fill="url(#ff)" />
        <circle cx="17" cy="22" r="8" fill="#7a3fd0" />
        <path d="M9 15q5-3 10 0l4 2q-4 3-7 2 1 6 8 4-6 10-14 4-4-5-1-12z" fill="#ff9a2a" opacity=".85" />
      </Task>
      <Task w="w-[73px]" ul hi>
        <rect x="1" y="0" width="35" height="40" fill="#fff" />
        <g stroke="#4a86ac" strokeWidth="1.700">
          <path d="M18 14v12M12 20h12" stroke="#2d5f86" />
          <path d="M11 7v7M7.500 10.500h7M26 7v7M22.500 10.500h7M11 26v7M7.500 29.500h7M26 26v7M22.500 29.500h7M18 2v5M15.500 4.500h5M18 33v5M15.500 35.500h5M5 17v6M2.500 20h5M31 17v6M28.500 20h5" />
        </g>
      </Task>
      <Task w="w-[75px]" ul>
        <ellipse cx="18" cy="20" rx="18" ry="20" fill="#35a353" />
        <path d="M18 0a18 20 0 0 1 15.600 10H18a9 10 0 0 0-8.500 7L3 9A18 20 0 0 1 18 0z" fill="#ea4335" />
        <path d="M33.600 10A18 20 0 0 1 17 40l8-15q3-8-3-15z" fill="#fbc21c" />
        <ellipse cx="18" cy="20" rx="9" ry="9.500" fill="#fff" />
        <ellipse cx="18" cy="20" rx="7" ry="7.500" fill="#3579e6" />
      </Task>
      <Task w="w-[74px]" ul>
        <path d="M5 10l22 21v9L0 15z" fill="#1572bc" />
        <path d="M27 0v10L5 30l-5-4z" fill="#2a8fdc" />
        <path d="M27 0l10 4v32l-10 4z" fill="#36a5f0" />
      </Task>
      <Task w="w-[74px]" ul>
        <path d="M5 0h26v30H5z" fill="#8ea8dc" />
        <path d="M0 4h24v30H0z" fill="#3c5fae" />
        <path d="M7 7l28-2v34L7 37z" fill="#f4f7fc" />
        <path d="M11 13l3 13 3-11 3 11 3-13M26 14h6M26 19h6M26 24h6M12 31h20" stroke="#3660b4" strokeWidth="2.600" fill="none" />
      </Task>
      <Task w="w-[75px]" ul>
        <path d="M10 3h22l4 30-8 5L0 33z" fill="#6fa9ae" />
        <path d="M11 4h21L24 37 0 32z" fill="#8cc6cc" />
        <path d="M31 4l5 29-10 7-2-4z" fill="#e3e8e6" />
      </Task>
      <Task w="w-[73px]" ul>
        <ellipse cx="18" cy="20" rx="18" ry="19" fill="#f3f3f3" />
        <path d="M10 10l8 12 8-12M18 21v12" stroke="#d8231f" strokeWidth="4" fill="none" />
      </Task>
      <Task w="w-[74px]" ul>
        <path d="M6 0h26v30H0V5z" fill="#f3a88c" />
        <path d="M1 5l24-2v30H1z" fill="#f7cdb9" />
        <path d="M3 10l33-2v30L3 35z" fill="#f4efec" />
        <path d="M7 13l26-2v23L7 32z" fill="#d9481f" />
        <path d="M10 17h7v4h-7zM10 23h7v4h-7z" fill="#fff" />
        <circle cx="25" cy="22" r="5" fill="none" stroke="#fff" strokeWidth="3" />
      </Task>
      <div className="ml-auto flex h-full w-[610px] items-center text-[21px] tracking-[-0.500px]">
        <svg width="40" height="50" viewBox="0 0 40 50" className="shrink-0">
          <circle cx="29" cy="13" r="9.500" fill="#f59a1d" />
          <path d="M2 34q-3-9 7-12 4-11 15-10 10 2 10 12 5 4 1 10-2 4-8 4H9q-6 0-7-4z" fill="#bcd4f7" />
          <path d="M4 34q8-8 16-5 8-6 16 4-2 5-8 5H9q-5 0-5-4z" fill="#8fb1ea" />
          <path d="M22 33h8v11q-5 4-8-1z" fill="#2f7fe0" />
        </svg>
        <span className="ml-[10px] w-[59px] tracking-[-0.700px]">32°C</span>
        <span className="w-[123px]">Light rain</span>
        <Ico s={20} h={14}>
          <path d="M1 12l9-9 9 9" stroke="#fff" />
        </Ico>
        <Ico s={22} h={28} c="ml-[18px]">
          <path d="M3 9h10v11H3zM13 12l4-2v9l-4-2M4 3q5-4 10 0M4 25q5 4 10 0" stroke="#fff" strokeWidth={1.600} />
        </Ico>
        <Ico s={26} c="ml-[10px]">
          <path d="M8 4h17v13H6M14 17v6M8 23h11M1 4h6v5H1zM4 9v8" stroke="#fff" strokeWidth={1.600} />
        </Ico>
        <Ico s={26} c="ml-[11px]">
          <path d="M1 9h4l5-5v17l-5-5H1zM14 10q2 3 0 6M18 7q4 6 0 12M22 4q6 9 0 18" stroke="#fff" strokeWidth={1.400} />
        </Ico>
        <span className="ml-[13px] text-[18px]">ENG</span>
        <div className="ml-auto mr-[25px] w-[92px] text-center text-[17.500px] leading-[27px] tracking-[-0.100px]">
          <div className="tracking-[-0.800px]">17:51</div>
          <div>24-04-2023</div>
        </div>
        <svg width="38" height="48" viewBox="0 0 38 48" className="mr-[19px] shrink-0">
          <path d="M1 5h25v21H14l-6 7v-7H1z" fill="#fff" />
          <path d="M5 10h17M5 15.500h17M5 21h10" stroke="#1d2c35" strokeWidth="1.800" />
          <circle cx="25" cy="33" r="11.500" fill="#2f383d" stroke="#9aa0a3" strokeWidth="1.500" />
          <text x="25" y="39" fontSize="16" fontWeight="600" fill="#fff" textAnchor="middle" fontFamily="Open Sans, sans-serif" letterSpacing="0">
            2
          </text>
        </svg>
        <div className="mr-[4px] h-full w-px bg-[#6e7b82]" />
      </div>
    </div>
  );
}

export default function App() {
  return (
    <div className="h-[2481px] w-[3508px] bg-white pt-[300px] pl-[306px]">
      <div className="w-[2907px]">
        <TitleBar />
        <MenuBar />
        <Toolbar />
        <div className="flex h-[1371px] bg-[#f4f4f4]">
          <DataPane />
          <div className="ml-[10px] flex">
            <CardsColumn />
          </div>
          <div className="ml-[9px] flex w-[2329px] flex-col gap-[10px]">
            <Shelf
              label="Columns"
              icon={
                <svg width="17" height="20" viewBox="0 0 17 20" stroke="#555" strokeWidth="2.200">
                  <path d="M3 0v3M9 0v3M15 0v3M3 5v15M9 5v15M15 5v15" />
                </svg>
              }
            >
              <Pill>YEAR(Balance Sh..</Pill>
              <Pill>QUARTER(Balanc..</Pill>
              <Pill plus>MONTH(Balance ..</Pill>
              <Pill green>SUM(Total Assets Us..</Pill>
            </Shelf>
            <Shelf
              label="Rows"
              icon={
                <svg width="18" height="16" viewBox="0 0 18 16" stroke="#555" strokeWidth="2.600">
                  <path d="M0 2h3M5 2h13M0 8h3M5 8h13M0 14h3M5 14h13" />
                </svg>
              }
            >
              <Pill plus>Country</Pill>
            </Shelf>
            <div className="-mt-px flex justify-between">
              <Chart />
              <RightCards />
            </div>
          </div>
        </div>
        <SheetTabs />
        <StatusBar />
        <TaskBar />
      </div>
    </div>
  );
}
